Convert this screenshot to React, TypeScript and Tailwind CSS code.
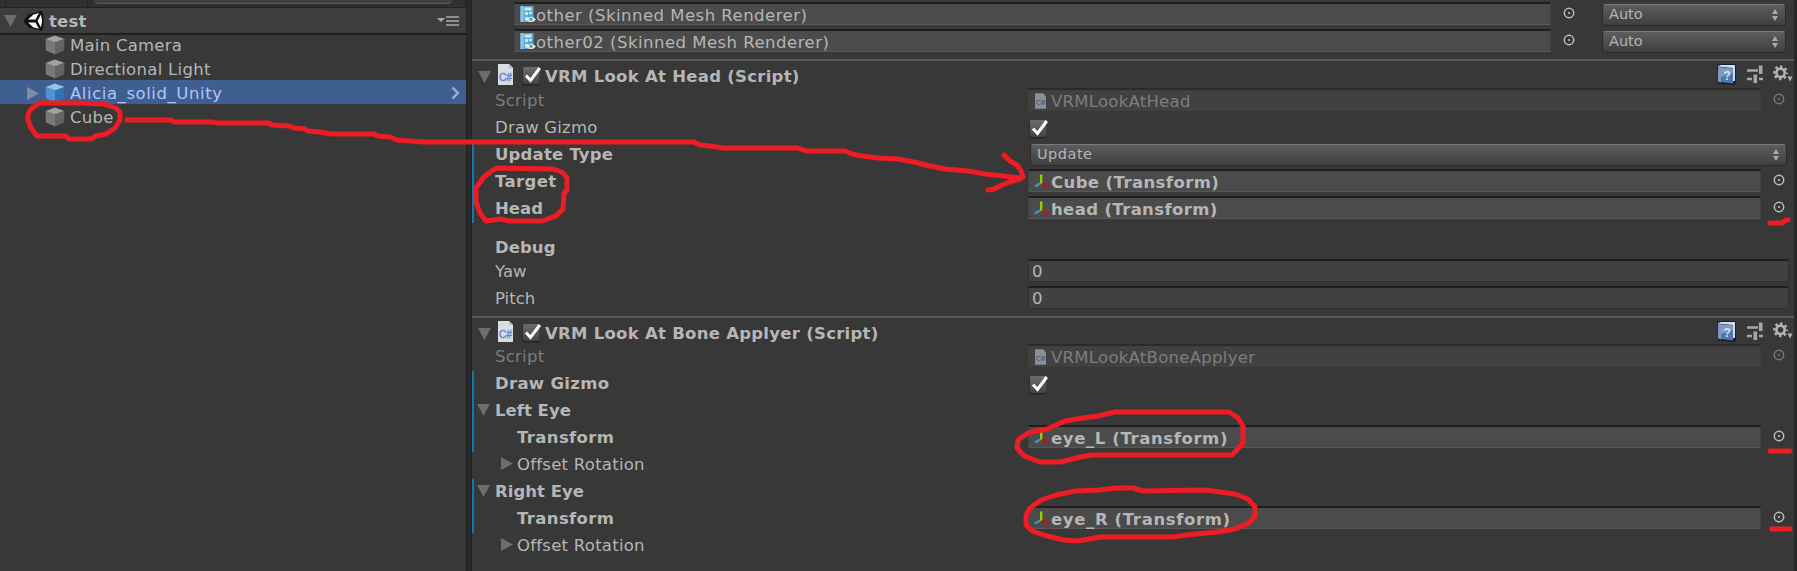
import React from "react";

type IconProps = { className?: string };

function Cube({ blue }: { blue?: boolean }) {
  const c = blue ? ["#8fc4ea", "#4d93d2", "#3370b5"] : ["#a0a0a0", "#797979", "#636363"];
  return (
    <svg viewBox="0 0 20 20" className="block h-5 w-5 shrink-0">
      <path d="M10 .5 19.5 4 10 7.5.5 4z" fill={c[0]} />
      <path d="M.5 4 10 7.5V19.500L1 15.500z" fill={c[1]} />
      <path d="M19.500 4 10 7.500V19.500L19 15.500z" fill={c[2]} />
    </svg>
  );
}

function Unity() {
  return (
    <svg viewBox="0 0 22 22" className="block h-[22px] w-[22px] shrink-0">
      <path d="M.5 11 5.500 4.500 19 .8 20.500 6V16L19 21 5.500 17.500z" fill="#111" />
      <path d="M5 9.500 10.500 4.500 16 3 12.500 9.500z" fill="#fff" />
      <path d="M5 12.500H12.500L16 18.800 10.500 17.500z" fill="#f4f4f4" />
      <path d="M18 4.500 14.500 11 18 17.500 19 11z" fill="#fff" />
    </svg>
  );
}

function Down({ className = "" }: IconProps) {
  return (
    <svg viewBox="0 0 13 12" className={"block h-3 w-[13px] shrink-0 " + className}>
      <path d="M0 0H13L6.500 12z" fill="#6d6d6d" />
    </svg>
  );
}

function Right({ color = "#6d6d6d" }: { color?: string }) {
  return (
    <svg viewBox="0 0 12 13" className="block h-[13px] w-3 shrink-0">
      <path d="M0 0V13L12 6.500z" fill={color} />
    </svg>
  );
}

function CSharp({ className = "" }: IconProps) {
  return (
    <svg viewBox="0 0 15 21" className={"block shrink-0 " + className}>
      <path d="M0 0H11L15 4V21H0z" fill="#d9dde1" />
      <path d="M11 0 15 4H11z" fill="#b9bec4" />
      <text x="1" y="16.500" fontSize="10" fontFamily="Liberation Sans" stroke="#5f85d3" strokeWidth=".4" textLength="13" lengthAdjust="spacingAndGlyphs" fill="#5f85d3">C#</text>
    </svg>
  );
}

function Check() {
  return (
    <svg viewBox="0 0 20 20" className="block h-5 w-5 shrink-0">
      <defs>
        <linearGradient id="box" x1="0" y1="0" x2="0" y2="1">
          <stop offset="0" stopColor="#6c6c6c" />
          <stop offset="1" stopColor="#434343" />
        </linearGradient>
      </defs>
      <rect x=".5" y="2" width="17.500" height="17.500" rx="2" fill="#242424" />
      <rect x="1" y="1" width="16.500" height="17" rx="1.500" fill="url(#box)" />
      <path d="M4 9.500 8.500 14.500 17.800 2" fill="none" stroke="#fff" strokeWidth="3" />
    </svg>
  );
}

function Axes() {
  return (
    <svg viewBox="0 0 16 16" className="mr-px block h-4 w-4 shrink-0">
      <path d="M7.200 9 .8 12.500" stroke="#3b97cf" strokeWidth="2.400" />
      <path d="M7.200 9 14.500 13" stroke="#b51a1a" strokeWidth="2.600" />
      <path d="M7.200 9.500V.5" stroke="#93cc0c" strokeWidth="2.400" />
    </svg>
  );
}

function Mesh() {
  return (
    <svg viewBox="0 0 16 17" className="block h-[17px] w-4 shrink-0">
      <rect x=".5" y="0" width="13" height="16" fill="#5fa9cf" />
      <rect x=".5" y="0" width="3" height="16" fill="#8cc9e6" />
      <path d="M4.500 1.500H11.500V4.500H4.500zM5 6H8V9H5zM9 6H12V8H9zM5 11H8V14.500H5z" fill="#cdeaf6" />
      <path d="M6 13.500Q11 8 16 13.500 11 18.500 6 13.500z" fill="#e3eff4" />
      <circle cx="11" cy="13.300" r="1.700" fill="#5a9dbf" />
    </svg>
  );
}

function Picker({ dim }: { dim?: boolean }) {
  const c = dim ? "#777" : "#bcbcbc";
  return (
    <svg viewBox="0 0 12 12" className="block h-3 w-3 shrink-0">
      <circle cx="6" cy="6" r="4.700" fill="none" stroke={c} strokeWidth="1.500" />
      <circle cx="6" cy="6" r="1.100" fill={c} />
    </svg>
  );
}

function HeaderTools() {
  return (
    <div className="flex items-start gap-[11px]">
      <svg viewBox="0 0 19 21" className="block h-[21px] w-[19px]">
        <path d="M0 0H19V20L16 21 1 19.500z" fill="#17202f" />
        <path d="M1 1 4 3V18.500L1 17.500z" fill="#7f97bb" />
        <path d="M2 1H18V17L16 17V4L4 3z" fill="#cfdcec" />
        <path d="M4 3.500 16 4.500V19.500L4 18z" fill="#4f77ab" />
        <path d="M4 3.500 16 4.500V9L4 13z" fill="#7b9cc8" />
        <text x="6.500" y="15.500" fontSize="12" fontFamily="Liberation Sans" fontWeight="700" fill="#dbe6f5">?</text>
      </svg>
      <svg viewBox="0 0 16 18" className="mt-px block h-[18px] w-4">
        <path d="M0 5.500H11M0 14H5M12 14H16" stroke="#a6a6a6" strokeWidth="2.400" />
        <path d="M13.700 .5V9M8.300 9.500V18" stroke="#a6a6a6" strokeWidth="3.600" />
      </svg>
      <svg viewBox="0 0 20 18" className="mt-px -ml-px block h-[18px] w-5">
        <circle cx="7.500" cy="7.800" r="4.200" fill="none" stroke="#b4b4b4" strokeWidth="2.600" />
        <circle cx="7.500" cy="7.800" r="6.300" fill="none" stroke="#b4b4b4" strokeWidth="2.400" strokeDasharray="2.400 2.548" strokeDashoffset="1.200" />
        <path d="M14.500 11.500H19.500L17 16.500z" fill="#b4b4b4" />
      </svg>
    </div>
  );
}

type TextProps = { children: string; bold?: boolean; dim?: boolean; track?: string; size?: string; className?: string };

function Text({ children, bold, dim, track = "tracking-[0.2px]", size = "pt-[3px] text-[16.5px]", className = "" }: TextProps) {
  return (
    <span
      className={
        "font-['DejaVu_Sans','Liberation_Sans',sans-serif] leading-none whitespace-pre " +
        [size, track, bold ? "font-bold" : "", dim ? "text-[#7d7d7d]" : "text-[#b6b6b6]", className].join(" ")
      }
    >
      {children}
    </span>
  );
}

function Field({ children, dim, input }: { children: React.ReactNode; dim?: boolean; input?: boolean }) {
  return (
    <div
      className={
        "flex h-[23px] min-w-0 flex-1 items-center border border-t-2 pt-px " +
        (dim
          ? "border-[#3f3f3f] border-t-[#2b2b2b] bg-[#414141] pl-1.5"
          : input
          ? "border-[#313131] border-t-[#1f1f1f] bg-[#414141] pl-[3px]"
          : "border-[#424242] border-t-[#1e1e1e] border-b-[#585858] bg-[#4b4b4b] pl-[5px]")
      }
    >
      {children}
    </div>
  );
}

function Popup({ children, className = "" }: { children: React.ReactNode; className?: string }) {
  return (
    <div className={"flex h-[22px] items-center justify-between rounded-[4px] border border-[#2a2a2a] border-t-[#7a7a7a] bg-linear-to-b from-[#5d5d5d] to-[#3f3f3f] pr-[7px] pl-[6px] " + className}>
      {children}
      <svg viewBox="0 0 6 12" className="block h-3 w-1.5">
        <path d="M0 5 3 0 6 5zM0 7 3 12 6 7z" fill="#aaa" />
      </svg>
    </div>
  );
}

function Row({ label, children, marked }: { label: React.ReactNode; children?: React.ReactNode; marked?: boolean }) {
  return (
    <div className={"flex h-[27px] border-l-2 " + (marked ? "border-[#1478ae]" : "border-transparent")}>
      <div className="flex h-[23px] w-[554px] shrink-0 items-center">{label}</div>
      {children}
    </div>
  );
}

function PickRow({ label, value, dim, marked }: { label: React.ReactNode; value: React.ReactNode; dim?: boolean; marked?: boolean }) {
  return (
    <Row label={label} marked={marked}>
      <Field dim={dim}>{value}</Field>
      <div className="flex w-[33px] items-start pt-[5px] pl-3">
        <Picker dim={dim} />
      </div>
    </Row>
  );
}

function ComponentHeader({ title }: { title: string }) {
  return (
    <div className="flex h-7 items-start border-t-2 border-[#595959] pt-[2px]">
      <Down className="mt-2 ml-[6px]" />
      <CSharp className="mt-px ml-[7px] h-[21px] w-[15px]" />
      <div className="mt-[3px] ml-[9px]"><Check /></div>
      <div className="ml-[3px] flex h-[25px] flex-1 items-center"><Text bold track="tracking-[0.27px]">{title}</Text></div>
      <div className="pt-px pr-px"><HeaderTools /></div>
    </div>
  );
}

function Bone({ title, value, track }: { title: string; value: string; track: string }) {
  return (
    <>
      <Row marked label={<><Down className="mr-[5px] ml-[3px]" /><Text bold track="tracking-[0.02px]">{title}</Text></>} />
      <PickRow marked label={<Text bold track="tracking-[0.36px]" className="ml-[43px]">Transform</Text>} value={<><Axes /><Text bold track={track}>{value}</Text></>} />
      <Row label={<div className="ml-[27px] flex items-center gap-1"><Right /><Text track="tracking-[0.25px]">Offset Rotation</Text></div>} />
    </>
  );
}

function TreeItem({ children, selected, track = "tracking-[0.25px]" }: { children: string; selected?: boolean; track?: string }) {
  return (
    <div className={"flex h-6 items-center pr-[6px] " + (selected ? "bg-[#3e5f90]" : "")}>
      <div className="flex w-[45px] shrink-0 pt-0.5 pl-[27px]">{selected && <Right color="#7d8da9" />}</div>
      <div className="pt-px"><Cube blue={selected} /></div>
      <span className={"ml-[5px] flex-1 pt-[4px] font-['DejaVu_Sans','Liberation_Sans',sans-serif] text-[16.5px] leading-none " + track + (selected ? " text-[#b1c4ff]" : " text-[#b6b6b6]")}>{children}</span>
      {selected && (
        <svg viewBox="0 0 9 14" className="mt-px block h-3.5 w-[9px]"><path d="M1.500 1.500 7 7 1.500 12.500" fill="none" stroke="#8fabd2" strokeWidth="2.500" /></svg>
      )}
    </div>
  );
}

function Annotations() {
  return (
    <svg viewBox="0 0 1797 571" className="pointer-events-none absolute inset-0 h-[571px] w-[1797px]" fill="none" stroke="#ee1c24" strokeWidth="5" strokeLinecap="round" strokeLinejoin="round">
      <path d="M37 105C30 108 27 114 28 120L31 128 37 136H66L69 139H91L96 136 106 134 115 128 120 120 120 112 116 108 104 104 80 103H39" />
      <path d="M127 120H171L174 122H213L216 123H269L272 125 289 126 294 128 305 129 308 131 320 132 331 134H374L378 136 390 137 397 140 410 141 424 142H694L700 145 710 146 723 148H798L806 151H845L852 154 862 156 878 158 898 159 914 162 930 166 945 169 968 171 985 174 1003 176 1020 178" />
      <path d="M1004 155 1010 161 1017 165 1021 171 1023 177 1020 179 1009 182 1002 185 994 189 988 190" />
      <path d="M493 170 484 177 476 188 476 202 480 213 486 221 501 219 509 221H542L556 216 563 209 564 193 567 190 567 178 562 172 553 169 498 168z" />
      <path d="M1770 223H1782L1786 220H1788M1770 451H1790M1772 529H1790" />
      <path d="M1229 412 1115 412 1098 416 1083 418 1065 421 1047 429 1028 433 1018 440 1017 448 1024 456 1040 462H1061L1080 457 1092 455H1232L1243 443 1243 426 1238 418z" />
      <path d="M1143 491 1133 488H1117L1099 490 1075 491 1056 495 1041 500 1030 508 1026 515 1026 525 1032 531 1047 536 1064 540 1078 541 1100 537H1173L1186 535 1217 532 1235 529 1249 523 1255 516 1255 507 1248 499 1235 494 1205 490z" />
    </svg>
  );
}

export default function App() {
  return (
    <div className="relative flex h-[571px] w-[1797px] overflow-hidden bg-[#383838]">
      <aside className="flex w-[466px] shrink-0 flex-col">
        <div className="flex h-2 items-start border-b border-[#242424] bg-[#303030]">
          <div className="h-full w-1.5 border-r border-[#252525]" />
          <div className="h-full w-[82px] border-r border-[#222]" />
          <div className="ml-[6px] h-1 w-[358px] rounded-b-full border-b border-[#585858] bg-[#414141]" />
        </div>
        <div className="flex h-[27px] items-center border-b-2 border-[#202020] bg-[#3d3d3d] pr-[7px]">
          <Down className="ml-1" />
          <div className="ml-[6px]"><Unity /></div>
          <Text bold className="ml-[4px] flex-1">test</Text>
          <svg viewBox="0 0 22 10" className="block h-2.5 w-[22px]"><path d="M0 2H8L4 6z" fill="#aaa" /><path d="M9 1H22M9 5H22M9 9H22" stroke="#aaa" strokeWidth="1.600" /></svg>
        </div>
        <div className="-mt-[3px]">
          <TreeItem>Main Camera</TreeItem>
          <TreeItem track="tracking-[0.3px]">Directional Light</TreeItem>
          <TreeItem selected track="tracking-[0.56px]">Alicia_solid_Unity</TreeItem>
          <TreeItem>Cube</TreeItem>
        </div>
      </aside>
      <div className="w-1.5 shrink-0 border-x border-[#222] bg-[#2a2a2a]" />
      <main className="flex min-w-0 flex-1 flex-col">
        <div className="flex h-[59px] flex-col gap-1 pt-0.5 pl-[42px]">
          {["other (Skinned Mesh Renderer)", "other02 (Skinned Mesh Renderer)"].map((name) => (
            <div key={name} className="flex h-[23px]">
              <Field><Mesh /><Text track="tracking-[0.48px]">{name}</Text></Field>
              <div className="w-[51px] pt-[5px] pl-3"><Picker /></div>
              <Popup className="mt-0.5 mr-2 w-[184px]"><Text size="pb-px text-[14.5px]" track="tracking-[0px]">Auto</Text></Popup>
            </div>
          ))}
        </div>
        <ComponentHeader title="VRM Look At Head (Script)" />
        <div className="flex h-[229px] flex-col pt-px">
          <PickRow dim label={<Text dim track="tracking-[0.25px]" className="ml-[21px]">Script</Text>} value={<><CSharp className="h-4 w-[11px] opacity-50" /><Text dim track="tracking-[0.26px]" className="ml-[5px]">VRMLookAtHead</Text></>} />
          <Row label={<Text track="tracking-[0.2px]" className="ml-[21px]">Draw Gizmo</Text>}><div className="pt-1 pl-px"><Check /></div></Row>
          <Row marked label={<Text bold className="ml-[21px]">Update Type</Text>}><Popup className="mt-0.5 mr-[7px] ml-0.5 flex-1"><Text size="pb-0.5 text-[14.5px]" track="tracking-[0.5px]">Update</Text></Popup></Row>
          <PickRow marked label={<Text bold track="tracking-[0.38px]" className="ml-[21px]">Target</Text>} value={<><Axes /><Text bold track="tracking-[0.4px]">Cube (Transform)</Text></>} />
          <PickRow marked label={<Text bold track="tracking-[0px]" className="ml-[21px]">Head</Text>} value={<><Axes /><Text bold track="tracking-[0.36px]">head (Transform)</Text></>} />
          <div className="flex h-9 items-center pt-[12px]"><Text bold track="tracking-[0.05px]" className="ml-[23px]">Debug</Text></div>
          <Row label={<Text track="tracking-[0.1px]" className="ml-[21px]">Yaw</Text>}><Field input><Text size="pt-0.5 text-[16.5px]">0</Text></Field><div className="w-[5px]" /></Row>
          <Row label={<Text track="tracking-[0px]" className="ml-[21px]">Pitch</Text>}><Field input><Text size="pt-0.5 text-[16.5px]">0</Text></Field><div className="w-[5px]" /></Row>
        </div>
        <ComponentHeader title="VRM Look At Bone Applyer (Script)" />
        <PickRow dim label={<Text dim track="tracking-[0.25px]" className="ml-[21px]">Script</Text>} value={<><CSharp className="h-4 w-[11px] opacity-50" /><Text dim track="tracking-[0.28px]" className="ml-[5px]">VRMLookAtBoneApplyer</Text></>} />
        <Row marked label={<Text bold track="tracking-[0.3px]" className="ml-[21px]">Draw Gizmo</Text>}><div className="pt-1 pl-px"><Check /></div></Row>
        <Bone title="Left Eye" value="eye_L (Transform)" track="tracking-[0.6px]" />
        <Bone title="Right Eye" value="eye_R (Transform)" track="tracking-[0.63px]" />
      </main>
      <div className="w-[3px] shrink-0 bg-[#282828]" />
      <Annotations />
    </div>
  );
}
